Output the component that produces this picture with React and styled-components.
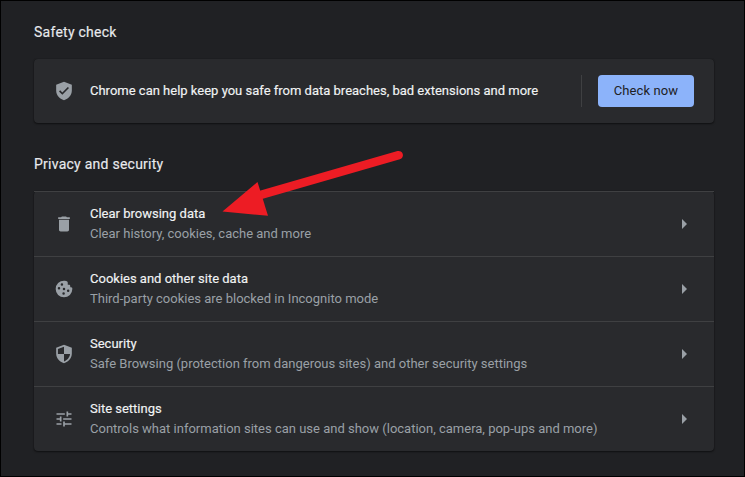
import React from 'react';
import styled, { createGlobalStyle } from "styled-components";

const rows = [
  {
    icon: "trash",
    title: "Clear browsing data",
    text: "Clear history, cookies, cache and more"
  },
  {
    icon: "cookie",
    title: "Cookies and other site data",
    text: "Third-party cookies are blocked in Incognito mode"
  },
  {
    icon: "security",
    title: "Security",
    text: "Safe Browsing (protection from dangerous sites) and other security settings"
  },
  {
    icon: "tune",
    title: "Site settings",
    text: "Controls what information sites can use and show (location, camera, pop-ups and more)"
  },
]

const paths = {
  verified: "M12 1L2.600 4.500v7c0 5.300 3.900 10.240 9.400 11.500 5.500-1.260 9.400-6.200 9.400-11.500v-7L12 1zm-2 15.500l-4-4 1.410-1.410L10 13.670l6.590-6.590L18 8.500l-8 8z",
  trash: "M6 19c0 1.100.9 2 2 2h8c1.100 0 2-.9 2-2V7H6v12zM19 4h-3.500l-1-1h-5l-1 1H5v2h14V4z",
  cookie: "M12 2a10 10 0 1 0 10 10c0-.5-.1-1-.2-1.500-.4-.8-1.300-.8-2.300-.6V8.500c0-.9-.7-1.500-1.500-1.500h-1.500V5.500c0-1 0-1.500-.3-2.200C15.500 2.400 13.500 2 12 2zM9.500 5a1.500 1.500 0 1 1 0 3 1.500 1.500 0 0 1 0-3zM6 9.500a1.500 1.500 0 1 1 0 3 1.500 1.500 0 0 1 0-3zM12 10.500a1.500 1.500 0 1 1 0 3 1.500 1.500 0 0 1 0-3zM17 12.500a1.500 1.500 0 1 1 0 3 1.500 1.500 0 0 1 0-3zM11.500 16a1.500 1.500 0 1 1 0 3 1.500 1.500 0 0 1 0-3z",
  security: "M12 1L2.600 4.500v7c0 5.300 3.900 10.240 9.400 11.500 5.500-1.260 9.400-6.200 9.400-11.500v-7L12 1zm0 10.990h7.300c-.53 4.120-3.580 7.790-7.300 8.940V12H4.700V6l7.300-2.810v8.800z",
  tune: "M3 17v2h6v-2H3zM3 5v2h10V5H3zm10 16v-2h8v-2h-8v-2h-2v6h2zM7 9v2H3v2h4v2h2V9H7zm14 4v-2H11v2h10zm-6-4h2V7h4V5h-4V3h-2v6z",
}

const Icon = ({ name }) => (
  <IconSvg viewBox="0 0 24 24">
    <path fillRule="evenodd" d={paths[name]} />
  </IconSvg>
)

function App() {
  return (
    <Page>
      <GlobalStyle />
      <Heading>Safety check</Heading>
      <Card>
        <SafetyRow>
          <Icon name="verified" />
          <Title className="grow">Chrome can help keep you safe from data breaches, bad extensions and more</Title>
          <Divider />
          <Button>Check now</Button>
        </SafetyRow>
      </Card>

      <Heading $second>Privacy and security</Heading>
      <Card>
        {rows.map(({ icon, title, text }) => (
          <Row key={title}>
            <Icon name={icon} />
            <Labels>
              <Title>{title}</Title>
              <Text>{text}</Text>
            </Labels>
            <Caret viewBox="0 0 5 10">
              <path d="M0 0l5 5-5 5z" />
            </Caret>
          </Row>
        ))}
      </Card>

      <Arrow viewBox="0 0 190 70">
        <path className="shaft" d="M45 49.200L183.700 9.200" />
        <path d="M7.500 65.500L42.500 36L53 69.800z" />
      </Arrow>
    </Page>
  );
}

export default App;

const GlobalStyle = createGlobalStyle`
  * {
    box-sizing: border-box;
  }

  body {
    margin: 0;
    background: #202124;
    font-family: Roboto, sans-serif;
    font-size: 13px;
    line-height: 20px;
  }
`;

const Page = styled.div`
  position: relative;
  width: 745px;
  height: 477px;
  padding: 21px 30px 0 33px;
  border: 1px solid #000000;
  background: #202124;
  overflow: hidden;
`;

const Heading = styled.h2`
  margin: ${(props) => (props.$second ? "31px 0 17px" : "0 0 17px")};
  color: #e8eaed;
  font-size: 14px;
  font-weight: 400;
  letter-spacing: 0.25px;
  line-height: 20px;
  -webkit-text-stroke: 0.15px #e8eaed;
`;

const Card = styled.div`
  width: 680px;
  border-radius: 4px;
  background: #292a2d;
  box-shadow: 0 1px 2px rgba(0, 0, 0, 0.5), 0 0 1px rgba(0, 0, 0, 0.5);
`;

const SafetyRow = styled.div`
  display: flex;
  align-items: center;
  height: 64px;
  padding: 0 20px;

  .grow {
    flex: 1;
  }
`;

const Row = styled.div`
  display: flex;
  align-items: center;
  height: 65px;
  padding: 0 27px 0 20px;
  border-top: 1px solid #3f4042;
`;

const IconSvg = styled.svg`
  width: 20px;
  height: 20px;
  margin-right: 16px;
  flex-shrink: 0;
  fill: #9aa0a6;
`;

const Labels = styled.div`
  flex: 1;
`;

const Title = styled.div`
  color: #f1f3f4;
  -webkit-text-stroke: 0.15px #f1f3f4;
`;

const Text = styled.div`
  color: #9aa0a6;
`;

const Divider = styled.div`
  width: 1px;
  height: 32px;
  margin-right: 16px;
  background: #3f4042;
`;

const Button = styled.button`
  width: 96px;
  height: 32px;
  padding: 0 0 2px;
  border: none;
  border-radius: 4px;
  background: #8cb3fa;
  color: #202124;
  font-family: inherit;
  font-size: 13px;
  letter-spacing: 0.1px;
`;

const Caret = styled.svg`
  width: 5px;
  height: 10px;
  fill: #9aa0a6;
`;

const Arrow = styled.svg`
  position: absolute;
  top: 145px;
  left: 214px;
  width: 190px;
  height: 70px;
  fill: #ed1c24;

  .shaft {
    stroke: #ed1c24;
    stroke-width: 8.5px;
    stroke-linecap: round;
  }
`;
